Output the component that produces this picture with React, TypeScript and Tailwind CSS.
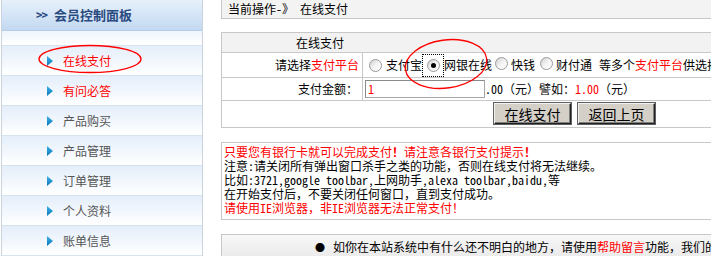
import React from 'react';

const font = '[font-family:"Noto_Sans_Mono_CJK_SC","Noto_Sans_CJK_SC",sans-serif]';

const menu = [
  { label: '在线支付', red: true },
  { label: '有问必答', red: true },
  { label: '产品购买' },
  { label: '产品管理' },
  { label: '订单管理' },
  { label: '个人资料' },
  { label: '账单信息' },
];

const Radio = ({ checked }: { checked?: boolean }) => (
  <span className="relative inline-block w-[13px] h-[13px] shrink-0 rounded-full border border-[#9a9a9a] bg-gradient-to-br from-[#cfcfcf] via-[#f4f4f4] to-white">
    {checked && (
      <span className="absolute left-[3px] top-[3px] w-[5px] h-[5px] rounded-full bg-black" />
    )}
  </span>
);

const Arrow = () => (
  <svg width="6" height="10" viewBox="0 0 6 10" className="shrink-0">
    <defs>
      <linearGradient id="ag" x1="0" y1="0" x2="0" y2="1">
        <stop offset="0" stopColor="#3fb0e6" />
        <stop offset="1" stopColor="#0a78b8" />
      </linearGradient>
    </defs>
    <path d="M0 0 L6 5 L0 10 Z" fill="url(#ag)" />
  </svg>
);

const Sidebar = () => (
  <div className="w-[202px] shrink-0 ml-[1px] border-x border-[#c9d3dd] bg-white">
    <div className="h-[31px] flex items-center pl-[34px] border-b border-[#b7cde6] bg-gradient-to-b from-[#e6f0fb] to-[#c3d9f2]">
      <span className="text-[13px] font-bold text-[#2a4b80] tracking-[-1px] mr-[7px]">&gt;&gt;</span>
      <span className="text-[13px] font-bold text-[#2a4b80]">会员控制面板</span>
    </div>
    <div className="h-[15px] border-b border-[#d8e4f0] bg-gradient-to-b from-[#eef5fc] to-white" />
    {menu.map((m) => (
      <div
        key={m.label}
        className="h-[30px] flex items-center pl-[45px] border-b border-[#d6e2ee] bg-gradient-to-b from-[#e4eefa] to-white"
      >
        <Arrow />
        <span className={`ml-[10px] text-[12px] ${m.red ? 'text-[#ff0000]' : 'text-[#555555]'}`}>{m.label}</span>
      </div>
    ))}
  </div>
);

const Main = () => (
  <div className="ml-[18px] w-[540px] shrink-0 text-[12px] text-black">
    <div className="h-[19px] border-x border-b border-[#c8c8c8] bg-[#f3f3f3] flex items-center pl-[6px]">
      当前操作-》 在线支付
    </div>

    <div className="mt-[13px] border border-[#c8c8c8]">
      <div className="h-[20px] border-b border-[#c8c8c8] bg-[#f2f2f2] flex items-center pl-[74px]">在线支付</div>
      <div className="h-[25px] border-b border-[#c8c8c8] flex">
        <div className="w-[141px] shrink-0 border-r border-[#c8c8c8] flex items-center justify-end pr-[3px]">
          请选择<span className="text-[#ff0000]">支付平台</span>
        </div>
        <div className="flex items-center pl-[6px] whitespace-nowrap">
          <Radio />
          <span className="ml-[4px]">支付宝</span>
          <span className="w-[22px] h-[23px] border border-dotted border-black flex items-center justify-center">
            <Radio checked />
          </span>
          <span>网银在线</span>
          <span className="ml-[3px]"><Radio /></span>
          <span className="ml-[3px]">快钱</span>
          <span className="ml-[5px]"><Radio /></span>
          <span className="ml-[3px]">财付通</span>
          <span className="ml-[7px]">等多个</span>
          <span className="text-[#ff0000]">支付平台</span>
          <span>供选择</span>
        </div>
      </div>
      <div className="h-[23px] border-b border-[#c8c8c8] flex">
        <div className="w-[141px] shrink-0 border-r border-[#c8c8c8] flex items-center justify-end pr-[4px]">
          支付金额：
        </div>
        <div className="flex items-center pl-[2px] whitespace-nowrap">
          <div className="w-[120px] h-[18px] border border-[#a5a5a5] border-t-[#8a8a8a] border-l-[#8a8a8a] flex items-center pl-[2px] text-[#ff0000]">
            1
          </div>
          <span>.00（元）譬如：</span>
          <span className="text-[#ff0000]">1.00</span>
          <span>（元）</span>
        </div>
      </div>
      <div className="h-[26px] flex items-start pt-[2px] pl-[272px] gap-[7px]">
        {['在线支付', '返回上页'].map((b) => (
          <button
            key={b}
            className={`${font} w-[77px] h-[21px] bg-[#d4d0c8] text-[14px] leading-none text-black border border-t-[#f2f2f2] border-l-[#f2f2f2] border-r-[#202020] border-b-[#202020] shadow-[inset_-1px_-1px_0_#808080,0_0_0_1px_#606060]`}
          >
            {b}
          </button>
        ))}
      </div>
    </div>

    <div className="mt-[14px] h-[78px] border border-[#c8c8c8] pl-[2px] pt-[2px] leading-[14px]">
      <div className="text-[#ff0000]">只要您有银行卡就可以完成支付<b>！</b>请注意各银行支付提示<b>！</b></div>
      <div>注意:请关闭所有弹出窗口杀手之类的功能，否则在线支付将无法继续。</div>
      <div>比如:3721,google toolbar,上网助手,alexa toolbar,baidu,等</div>
      <div>在开始支付后，不要关闭任何窗口，直到支付成功。</div>
      <div className="text-[#ff0000]">请使用IE浏览器，非IE浏览器无法正常支付！</div>
    </div>

    <div className="mt-[14px] h-[30px] border border-[#c8c8c8] bg-gradient-to-b from-[#f7f7f7] to-[#e8e8e8] pl-[93px] pt-[3px] whitespace-nowrap">
      <span className="mr-[8px] text-[10px]">●</span>
      如你在本站系统中有什么还不明白的地方，请使用<span className="text-[#ff0000]">帮助留言</span>功能，我们的客服人员会及时为你解答。
    </div>
  </div>
);

export default function App() {
  return (
    <div className={`relative w-[711px] h-[256px] overflow-hidden bg-white flex ${font}`}>
      <Sidebar />
      <Main />
      <svg className="absolute left-0 top-0 pointer-events-none" width="711" height="256">
        <ellipse cx="90" cy="59" rx="51" ry="13.5" fill="none" stroke="#ff0000" strokeWidth="1.3" />
        <ellipse cx="446" cy="64" rx="41" ry="24" fill="none" stroke="#ff0000" strokeWidth="1.3" transform="rotate(-8 446 64)" />
      </svg>
    </div>
  );
}
